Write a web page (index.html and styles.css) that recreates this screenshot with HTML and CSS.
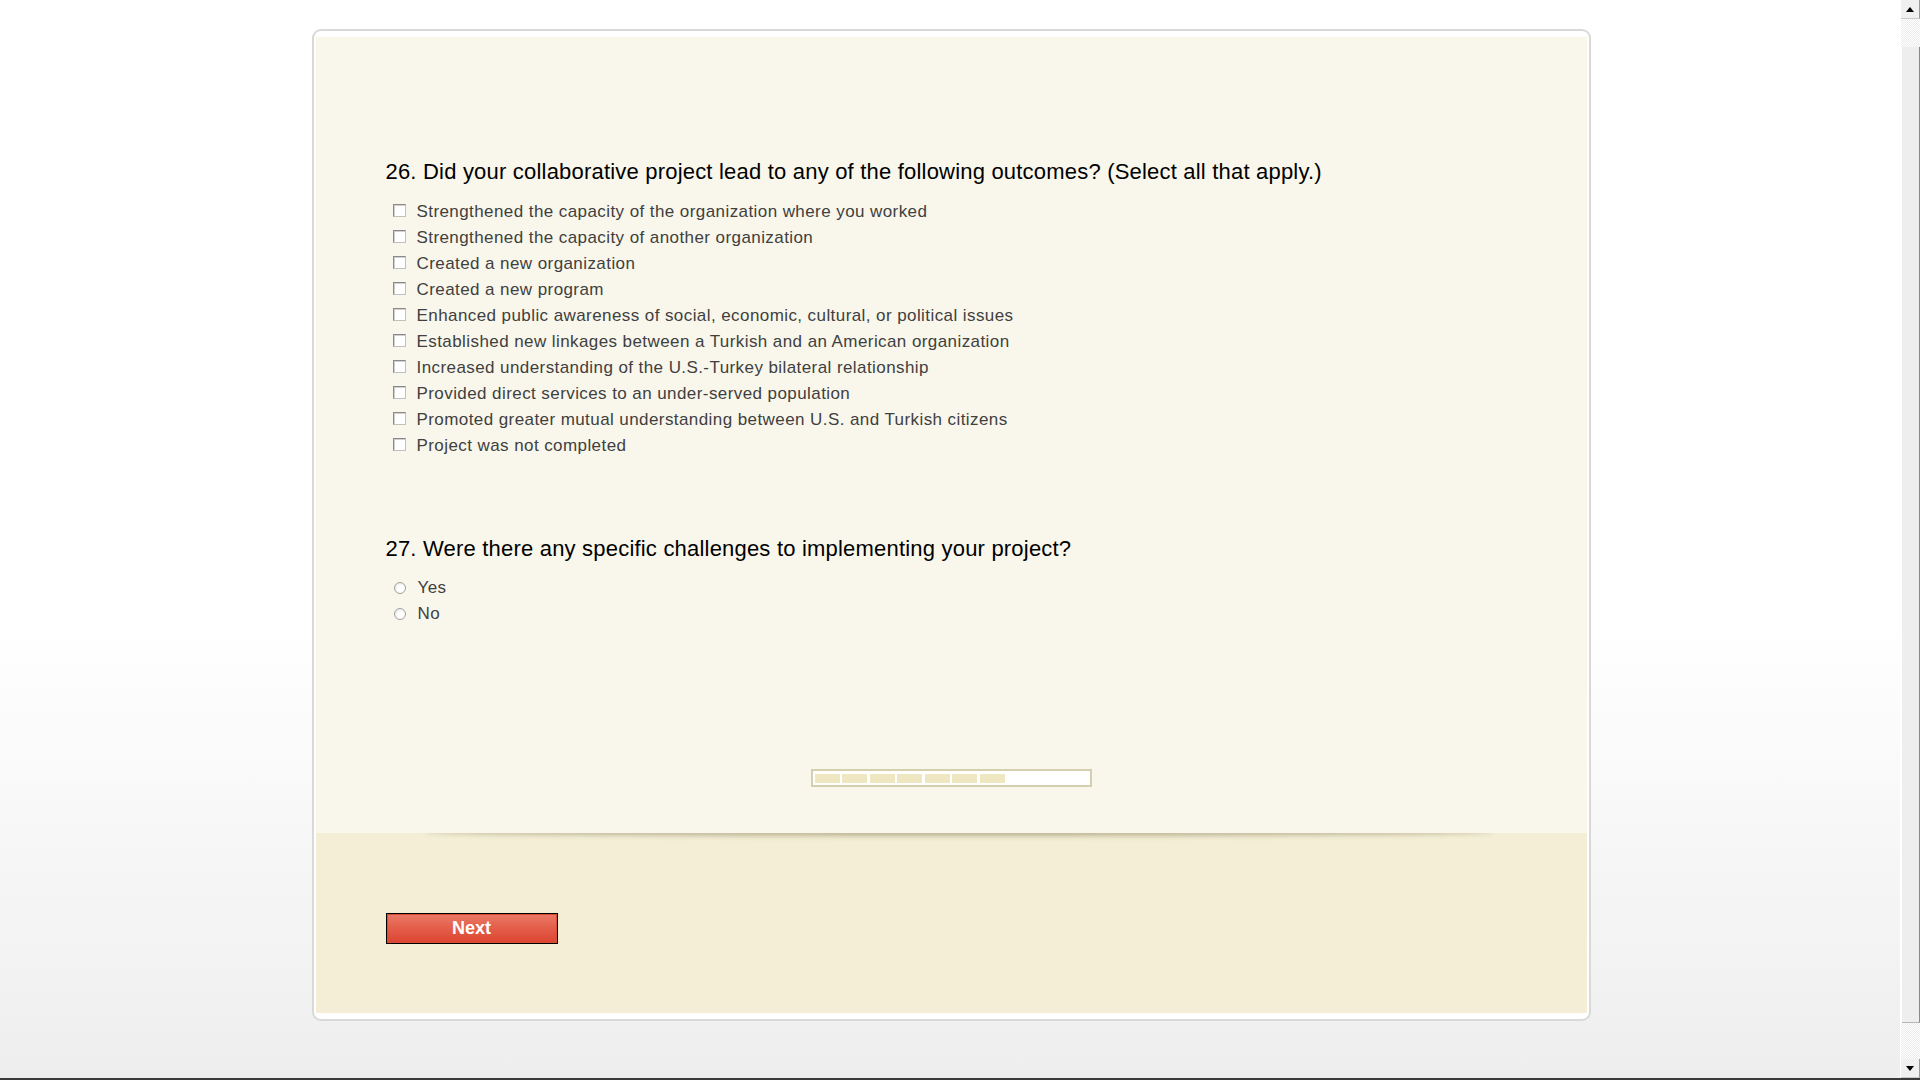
FILE: index.html
```html
<!DOCTYPE html>
<html lang="en">
<head>
    <meta charset="UTF-8">
    <meta name="viewport" content="width=device-width, initial-scale=1.0">
    <title>Survey</title>
    <link rel="stylesheet" href="styles.css">
</head>
<body>
    <div class="screen">
        <main class="page">
            <form class="survey">
                <div class="survey-body">
                    <div class="question">
                        <h2 class="question-title">26. Did your collaborative project lead to any of the following outcomes? (Select all that apply.)</h2>
                        <ul class="choices">
                            <li><label><input type="checkbox" class="check"> Strengthened the capacity of the organization where you worked</label></li>
                            <li><label><input type="checkbox" class="check"> Strengthened the capacity of another organization</label></li>
                            <li><label><input type="checkbox" class="check"> Created a new organization</label></li>
                            <li><label><input type="checkbox" class="check"> Created a new program</label></li>
                            <li><label><input type="checkbox" class="check"> Enhanced public awareness of social, economic, cultural, or political issues</label></li>
                            <li><label><input type="checkbox" class="check"> Established new linkages between a Turkish and an American organization</label></li>
                            <li><label><input type="checkbox" class="check"> Increased understanding of the U.S.-Turkey bilateral relationship</label></li>
                            <li><label><input type="checkbox" class="check"> Provided direct services to an under-served population</label></li>
                            <li><label><input type="checkbox" class="check"> Promoted greater mutual understanding between U.S. and Turkish citizens</label></li>
                            <li><label><input type="checkbox" class="check"> Project was not completed</label></li>
                        </ul>
                    </div>

                    <div class="question question-next">
                        <h2 class="question-title">27. Were there any specific challenges to implementing your project?</h2>
                        <ul class="choices">
                            <li><label><input type="radio" name="q27" class="radio"> Yes</label></li>
                            <li><label><input type="radio" name="q27" class="radio"> No</label></li>
                        </ul>
                    </div>

                    <div class="progress">
                        <span></span><span></span><span></span><span></span><span></span><span></span><span></span>
                    </div>
                </div>

                <div class="survey-footer">
                    <button type="button" class="next-btn">Next</button>
                </div>
            </form>
        </main>

        <div class="scrollbar">
            <div class="sb-btn"><span class="arrow-up"></span></div>
            <div class="sb-track sb-track-top"></div>
            <div class="sb-thumb"></div>
            <div class="sb-track sb-track-bottom"></div>
            <div class="sb-btn"><span class="arrow-down"></span></div>
        </div>
    </div>
    <div class="bottom-edge"></div>
</body>
</html>
```

FILE: styles.css
```css
html, body {
    margin: 0;
    padding: 0;
}
body {
    font-family: "Liberation Sans", Arial, sans-serif;
    width: 1920px;
    height: 1080px;
    overflow: hidden;
    background: #fff;
}
.screen {
    display: flex;
    height: 1078px;
}
.page {
    flex: 1;
    padding: 29px 0 0 2px;
    background: linear-gradient(to bottom, #ffffff 0%, #ffffff 58%, #eeeeee 100%);
}

/* card */
.survey {
    width: 1271px;
    margin: 0 auto;
    padding: 6px 2px 6px;
    background: #fff;
    border: 2px solid #d9d9d9;
    border-radius: 9px;
}
.survey-body {
    background: #f9f7eb;
    padding: 122px 70px 46px;
}
.question-title {
    margin: 0;
    font-size: 22px;
    line-height: 25px;
    letter-spacing: 0.2px;
    font-weight: normal;
    color: #000;
}
.question-next {
    margin-top: 77px;
}
.choices {
    list-style: none;
    margin: 15px 0 0;
    padding: 0;
}
.question-next .choices {
    margin-top: 14px;
}
.choices li {
    height: 26px;
    line-height: 26px;
    font-size: 17px;
    letter-spacing: 0.42px;
    color: #404040;
}
.choices label {
    display: flex;
    align-items: center;
}
.check {
    appearance: none;
    -webkit-appearance: none;
    width: 13px;
    height: 13px;
    margin: -3px 11px 0 7px;
    border: 1px solid #8a8a8a;
    border-right-color: #c0c0c0;
    border-bottom-color: #c0c0c0;
    background: #fff;
    box-shadow: inset 1px 1px 0 #d0d0d0;
}
.radio {
    appearance: none;
    -webkit-appearance: none;
    width: 12px;
    height: 12px;
    margin: 0 12px 0 8px;
    border-radius: 50%;
    border: 1px solid #a0a0a0;
    background: radial-gradient(circle at 60% 60%, #ffffff 35%, #e0e0e0 100%);
}

/* progress */
.progress {
    display: flex;
    gap: 2.5px;
    width: 273px;
    height: 9px;
    margin: 142px auto 0;
    padding: 3px 2px 2px;
    background: #fff;
    border: 2px solid #d4d0ad;
}
.progress span {
    width: 25px;
    background: #efe7c2;
}

/* footer */
.survey-footer {
    position: relative;
    overflow: hidden;
    height: 100px;
    padding: 80px 70px 0;
    background: #f4eed6;
}
.survey-footer::before {
    content: "";
    position: absolute;
    top: -8px;
    left: 110px;
    right: 95px;
    height: 8px;
    border-radius: 50%;
    box-shadow: 0 3px 5px rgba(120, 110, 70, 0.45);
}
.next-btn {
    display: block;
    width: 172px;
    height: 31px;
    padding: 0;
    border: 1px solid #000;
    box-shadow: inset 0 0 0 1px #dc4b36;
    background: linear-gradient(to bottom, #ea7a68 0%, #e35d49 50%, #dd4430 100%);
    color: #fff;
    font-family: "Liberation Sans", Arial, sans-serif;
    font-size: 18px;
    font-weight: bold;
    cursor: pointer;
}

/* scrollbar */
.scrollbar {
    width: 20px;
    display: flex;
    flex-direction: column;
    background: #fff;
}
.sb-btn {
    height: 18px;
    margin-left: 1px;
    background: #f0f0f0;
    border-right: 1px solid #9a9a9a;
    border-bottom: 1px solid #c9c9c9;
    display: flex;
    align-items: center;
    justify-content: center;
}
.sb-track {
    margin-left: 1px;
    background-color: #fff;
    background-image: repeating-conic-gradient(#ececec 0 25%, #ffffff 0 50%);
    background-size: 2px 2px;
}
.sb-track-top {
    height: 28px;
}
.sb-thumb {
    height: 975px;
    margin-left: 2px;
    background: #eeeeee;
    border-right: 1px solid #8a8a8a;
    border-bottom: 1px solid #b5b5b5;
}
.sb-track-bottom {
    flex: 1;
}
.arrow-up,
.arrow-down {
    width: 0;
    height: 0;
    border-left: 4px solid transparent;
    border-right: 4px solid transparent;
}
.arrow-up {
    border-bottom: 5px solid #000;
}
.arrow-down {
    border-top: 5px solid #000;
}
.bottom-edge {
    height: 2px;
    background: #3a3a3a;
}
```
